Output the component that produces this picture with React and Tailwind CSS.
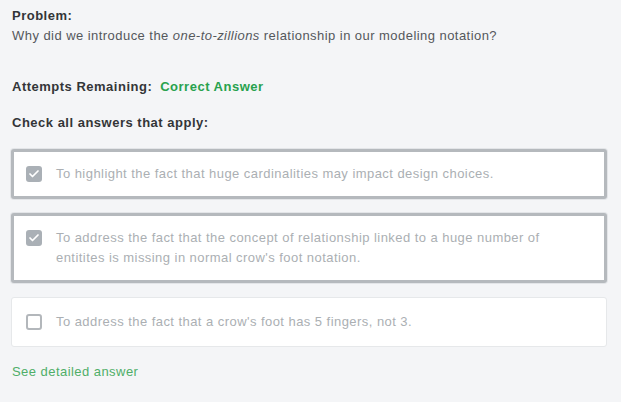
import { Check } from "lucide-react";

const answers = [
  { text: "To highlight the fact that huge cardinalities may impact design choices.", checked: true },
  {
    text: "To address the fact that the concept of relationship linked to a huge number of entitites is missing in normal crow's foot notation.",
    checked: true,
  },
  { text: "To address the fact that a crow's foot has 5 fingers, not 3.", checked: false },
];

function Checkbox({ checked }) {
  if (checked) {
    return (
      <span className="mt-[2px] flex h-4 w-4 shrink-0 items-center justify-center rounded-[3px] bg-[#aab0b6]">
        <Check className="h-3 w-3 text-white" strokeWidth={3.5} />
      </span>
    );
  }
  return <span className="mt-[2px] h-4 w-4 shrink-0 rounded-[3px] border-2 border-[#b3b7bb] bg-white" />;
}

function AnswerCard({ text, checked }) {
  return (
    <div
      className={
        checked
          ? "flex items-start gap-[14px] rounded-[3px] border-[3px] border-[#b5b9bd] bg-white px-3 py-3 shadow-[0_0_0_1px_#e3e5e8]"
          : "flex items-start gap-[14px] rounded-[3px] border border-[#e6e8ea] bg-white py-[14px] pl-[14px] pr-3"
      }
    >
      <Checkbox checked={checked} />
      <p className="pr-6 text-[13px] leading-5 tracking-[0.45px] text-[#abafb3]">{text}</p>
    </div>
  );
}

export default function App() {
  return (
    <div
      className="min-h-[402px] w-full bg-[#f4f5f7] pl-[11px] pr-[14px] pt-[6px] pb-4"
      style={{ fontFamily: "'Liberation Sans', Arial, sans-serif" }}
    >
      <div className="pl-[1px]">
        <h2 className="text-[13px] font-bold leading-5 tracking-[0.5px] text-[#333538]">Problem:</h2>
        <p className="text-[13px] leading-5 tracking-[0.45px] text-[#55585c]">
          Why did we introduce the <em>one-to-zillions</em> relationship in our modeling notation?
        </p>

        <div className="mt-[31px] flex gap-[8px] text-[13px] font-bold leading-5 tracking-[0.5px]">
          <span className="text-[#333538]">Attempts Remaining:</span>
          <span className="text-[#28a24e]">Correct Answer</span>
        </div>

        <h3 className="mt-4 text-[13px] font-bold leading-5 tracking-[0.5px] text-[#333538]">
          Check all answers that apply:
        </h3>
      </div>

      <div className="mt-4 flex flex-col gap-[14px]">
        {answers.map((a, i) => (
          <AnswerCard key={i} text={a.text} checked={a.checked} />
        ))}
      </div>

      <a href="#" className="mt-[15px] block pl-[1px] text-[13px] leading-5 tracking-[0.45px] text-[#4fae68]">
        See detailed answer
      </a>
    </div>
  );
}
